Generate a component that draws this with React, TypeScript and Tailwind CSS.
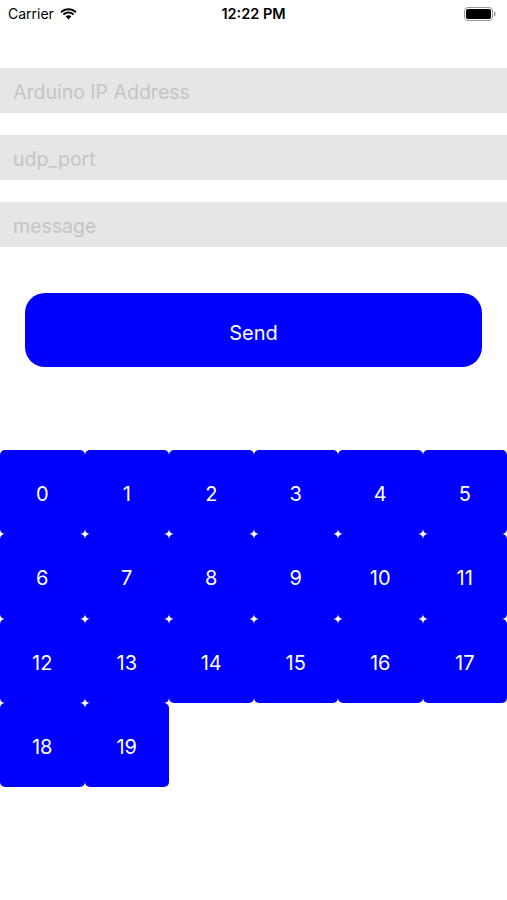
import React from "react";

function Wifi() {
  return (
    <svg width="17" height="12" viewBox="0 0 17 12">
      <path d="M8.5 2.2c2.6 0 5 1 6.8 2.7l1.3-1.4C14.4 1.4 11.5 0.2 8.5 0.2S2.6 1.4 0.4 3.5l1.3 1.4C3.5 3.2 5.9 2.2 8.5 2.2z" fill="#000" />
      <path d="M8.5 5.6c1.7 0 3.2 0.6 4.4 1.7l1.3-1.4C12.7 4.5 10.7 3.6 8.5 3.6S4.3 4.5 2.8 5.9l1.3 1.4C5.3 6.2 6.8 5.6 8.5 5.6z" fill="#000" />
      <path d="M8.5 7.2c-1.1 0-2.1 0.4-2.9 1.1L8.5 11.6l2.9-3.3C10.6 7.6 9.6 7.2 8.5 7.2z" fill="#000" />
    </svg>
  );
}

function Battery() {
  return (
    <svg width="33" height="14" viewBox="0 0 33 14">
      <rect x="0.5" y="0.5" width="28" height="13" rx="3.5" fill="none" stroke="#999" strokeWidth="1" />
      <rect x="2" y="2" width="25" height="10" rx="2" fill="#000" />
      <path d="M30 4.5v5c1 0 1.6-1 1.6-2.5S31 4.5 30 4.5z" fill="#999" />
    </svg>
  );
}

export default function App() {
  const nums = Array.from({ length: 20 }, (_, i) => i);
  return (
    <div className="w-[507px] h-[900px] bg-white relative overflow-hidden" style={{ fontFamily: "Inter, 'Noto Sans', sans-serif" }}>
      <div className="h-[27px] flex items-center justify-between px-[8px] relative">
        <div className="flex items-center gap-[6px]">
          <span className="text-[14px] text-black">Carrier</span>
          <Wifi />
        </div>
        <span className="absolute left-0 right-0 text-center text-[14.5px] font-semibold text-black">12:22 PM</span>
        <div className="pr-[2px]"><Battery /></div>
      </div>
      <div className="mt-[41px] flex flex-col gap-[22px]">
        {["Arduino IP Address", "udp_port", "message"].map((p) => (
          <div key={p} className="h-[45px] bg-[#e6e6e6] flex items-center px-[13px] pt-[4px]">
            <span className="text-[19.5px] text-[#c4c4c8]">{p}</span>
          </div>
        ))}
      </div>
      <div className="px-[25px] mt-[46px]">
        <div className="h-[74px] rounded-[20px] bg-[#0000ff] flex items-center justify-center pt-[6px]">
          <span className="text-white text-[20px]">Send</span>
        </div>
      </div>
      <div className="mt-[83px] grid grid-cols-6">
        {nums.map((n) => (
          <div key={n} className="h-[84.3px] bg-[#0000ff] rounded-[5px] flex items-center justify-center pt-[4px]">
            <span className="text-white text-[20px]">{n}</span>
          </div>
        ))}
      </div>
    </div>
  );
}
